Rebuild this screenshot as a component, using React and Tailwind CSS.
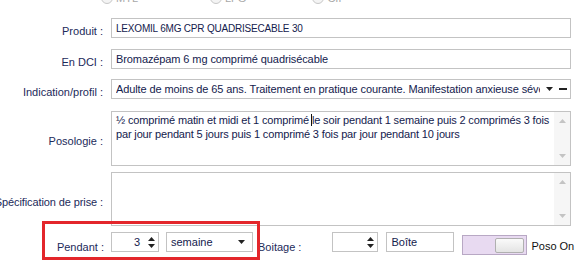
import React from 'react';

const font = { fontFamily: '"Liberation Sans", Arial, sans-serif' };

const Label = ({ children, className = '' }) => (
    <div className={`w-[103px] shrink-0 flex justify-end text-[11px] leading-[14px] text-[#1c2a5a] whitespace-nowrap ${className}`}>
        <span>{children}</span>
    </div>
);

const Radio = ({ label, className = '' }) => (
    <div className={`flex items-center gap-[3px] ${className}`}>
        <span className="w-[12px] h-[12px] rounded-full border border-[#c8c8c8] bg-[#f4f4f4]" />
        <span className="text-[11px] text-[#a8a8a8]">{label}</span>
    </div>
);

const SpinArrows = () => (
    <svg width="7" height="13" viewBox="0 0 7 13" className="shrink-0">
        <path d="M3.5 1 L7 5 L0 5 Z" fill="#222" />
        <path d="M0 8 L7 8 L3.5 12 Z" fill="#222" />
    </svg>
);

const DownArrow = () => (
    <svg width="7" height="4" viewBox="0 0 7 4" className="shrink-0">
        <path d="M0 0 L7 0 L3.5 4 Z" fill="#222" />
    </svg>
);

const Scrollbar = () => (
    <div className="w-[16px] shrink-0 bg-[#f6f6f6] flex flex-col items-center justify-between py-[7px]">
        <svg width="7" height="4" viewBox="0 0 7 4"><path d="M3.5 0 L7 4 L0 4 Z" fill="#c4c4c4" /></svg>
        <svg width="7" height="4" viewBox="0 0 7 4"><path d="M0 0 L7 0 L3.5 4 Z" fill="#c4c4c4" /></svg>
    </div>
);

export default function App() {
    return (
        <div className="relative w-[585px] h-[262px] overflow-hidden bg-white" style={font}>
            {/* radio row, cut by the top edge */}
            <div className="flex items-center h-[12px] -mt-[8px]">
                <Radio label="MTL" className="ml-[101px]" />
                <Radio label="LFG" className="ml-[72px]" />
                <Radio label="CIP" className="ml-[66px]" />
            </div>

            <div className="flex flex-col">
                {/* Produit */}
                <div className="flex items-center gap-[8px] h-[20px] mt-[14px] pr-[14px]">
                    <Label className="pt-[5px]">Produit :</Label>
                    <div className="flex-1 h-[20px] border border-[#c3c3c3] px-[4px] flex items-center text-[10px] tracking-[-0.2px] text-[#14214d]">
                        LEXOMIL 6MG CPR QUADRISECABLE 30
                    </div>
                </div>

                {/* En DCI */}
                <div className="flex items-center gap-[8px] h-[20px] mt-[11px] pr-[14px]">
                    <Label className="pt-[5px]">En DCI :</Label>
                    <div className="flex-1 h-[20px] border border-[#c3c3c3] px-[4px] flex items-center text-[11px] tracking-[-0.1px] text-[#14214d]">
                        Bromazépam 6 mg comprimé quadrisécable
                    </div>
                </div>

                {/* Indication */}
                <div className="flex items-center gap-[8px] h-[20px] mt-[10px] pr-[14px]">
                    <Label className="pt-[5px]">Indication/profil :</Label>
                    <div className="flex-1 min-w-0 h-[20px] border border-[#c3c3c3] pl-[4px] pr-[3px] flex items-center text-[11px] tracking-[-0.1px] text-[#14214d]">
                        <span className="flex-1 min-w-0 overflow-hidden whitespace-nowrap">
                            Adulte de moins de 65 ans. Traitement en pratique courante. Manifestation anxieuse sévère
                        </span>
                        <span className="ml-[6px] flex"><DownArrow /></span>
                        <span className="ml-[6px] w-[8px] h-[2px] bg-[#222]" />
                    </div>
                </div>

                {/* Posologie */}
                <div className="flex items-center gap-[8px] h-[55px] mt-[12px] pr-[14px]">
                    <Label className="pt-[4px]">Posologie :</Label>
                    <div className="flex-1 h-[55px] border border-[#c3c3c3] flex">
                        <div className="flex-1 px-[4px] pt-[1px] text-[11px] leading-[14px] tracking-[-0.15px] text-[#14214d]">
                            ½ comprimé matin et midi et 1 comprimé <span className="border-l border-[#111] -ml-[1px]" />le soir pendant 1 semaine puis 2 comprimés 3 fois par jour pendant 5 jours puis 1 comprimé 3 fois par jour pendant 10 jours
                        </div>
                        <Scrollbar />
                    </div>
                </div>

                {/* Spécification de prise */}
                <div className="flex items-center gap-[8px] h-[54px] mt-[6px] pr-[14px]">
                    <Label className="pt-[5px] tracking-[-0.1px]">Spécification de prise :</Label>
                    <div className="flex-1 h-[54px] border border-[#c3c3c3] flex">
                        <div className="flex-1" />
                        <Scrollbar />
                    </div>
                </div>

                {/* bottom row */}
                <div className="flex items-start mt-[6px] h-[24px] [&>*]:shrink-0">
                    <Label className="pt-[8px] w-[104px]">Pendant :</Label>
                    <div className="ml-[7px] w-[48px] h-[20px] border border-[#c3c3c3] flex items-center justify-end pr-[3px] text-[11px] text-[#14214d]">
                        <span className="mr-[8px]">3</span>
                        <SpinArrows />
                    </div>
                    <div className="ml-[7px] w-[87px] h-[20px] border border-[#c3c3c3] flex items-center pl-[4px] pr-[7px] text-[11px] text-[#14214d]">
                        <span className="flex-1">semaine</span>
                        <DownArrow />
                    </div>
                    <div className="ml-[5px] pt-[8px] text-[11px] leading-[14px] text-[#1c2a5a] whitespace-nowrap">Boitage :</div>
                    <div className="ml-[31px] w-[46px] h-[20px] border border-[#c3c3c3] flex items-center justify-end pr-[3px]">
                        <SpinArrows />
                    </div>
                    <div className="ml-[8px] w-[68px] h-[20px] border border-[#c3c3c3] flex items-center pl-[4px] text-[11px] text-[#14214d]">
                        Boîte
                    </div>
                    <div className="ml-[8px] mt-[3px] w-[65px] h-[20px] border border-[#b8a8c4] bg-[#e8daf1] flex items-center justify-end pr-[2px]">
                        <div className="w-[29px] h-[15px] border border-[#b0b0b0] rounded-[2px] bg-gradient-to-b from-[#fafafa] to-[#e4e4e4]" />
                    </div>
                    <div className="ml-[4px] pt-[7px] text-[11px] leading-[14px] text-[#111] whitespace-nowrap">Poso On</div>
                </div>
            </div>

            {/* red highlight annotation */}
            <div className="absolute left-[42px] top-[221px] w-[218px] h-[39px] border-[3px] border-[#e3262b]" />
        </div>
    );
}
